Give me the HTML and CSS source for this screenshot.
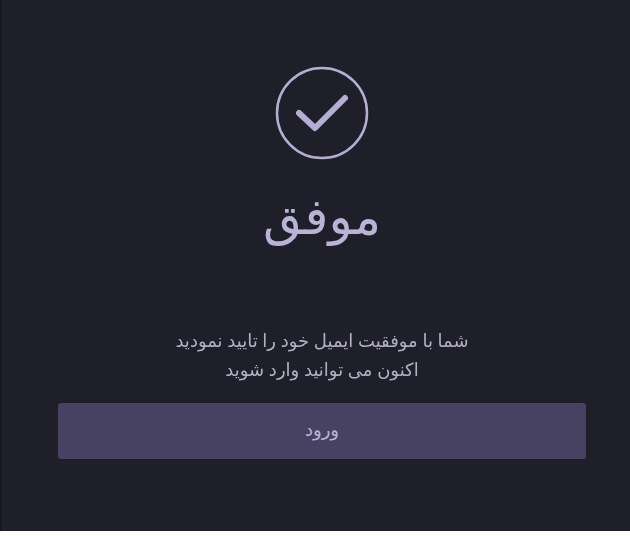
FILE: index.html
```html
<!DOCTYPE html>
<html lang="fa" dir="rtl">
<head>
    <meta charset="UTF-8">
    <meta name="viewport" content="width=device-width, initial-scale=1.0">
    <link rel="stylesheet" href="styles.css">
</head>
<body>
    <main class="panel">
        <svg class="check-icon" viewBox="0 0 94 94" fill="none">
            <circle cx="47" cy="47" r="45" class="check-ring"></circle>
            <path d="M24 47L40 62L70 32" class="check-mark"></path>
        </svg>
        <h1 class="title">موفق</h1>
        <p class="message">شما با موفقیت ایمیل خود را تایید نمودید<br>اکنون می توانید وارد شوید</p>
        <button type="button" class="login-btn">ورود</button>
    </main>
</body>
</html>
```

FILE: styles.css
```css
* {
    margin: 0;
    padding: 0;
    box-sizing: border-box;
}

body {
    background: #fdfdfd;
    min-height: 100vh;
    font-family: "Noto Sans", "DejaVu Sans", "Liberation Sans", sans-serif;
}

.panel {
    height: 531px;
    background: #1f1f2a;
    border-left: 2px solid #17171f;
    display: flex;
    flex-direction: column;
    align-items: center;
    padding: 66px 44px 0 56px;
}

.check-icon {
    width: 94px;
    height: 94px;
    flex-shrink: 0;
    filter: blur(0.4px);
}

.check-ring {
    stroke: #b4aed2;
    stroke-width: 2.5;
}

.check-mark {
    stroke: #b4aed2;
    stroke-width: 6;
    stroke-linecap: round;
    stroke-linejoin: round;
}

.title {
    margin-top: 22px;
    font-size: 50px;
    font-weight: 400;
    line-height: 66px;
    color: #b9b4d6;
    filter: blur(0.4px);
}

.message {
    margin-top: 78px;
    font-size: 18px;
    line-height: 29px;
    text-align: center;
    color: #b3b0c4;
    filter: blur(0.4px);
}

.login-btn {
    margin-top: 19px;
    width: 100%;
    height: 56px;
    padding-bottom: 4px;
    border: none;
    border-radius: 3px;
    background: #474162;
    color: #bab5d2;
    font-family: inherit;
    font-size: 18px;
}
```
